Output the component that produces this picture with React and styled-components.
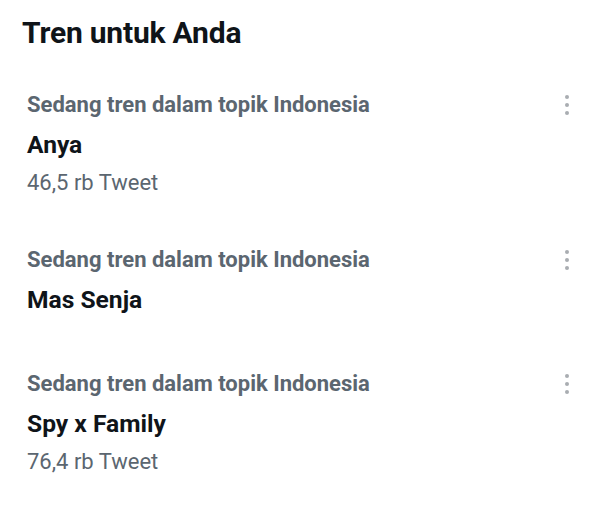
import React from 'react';
import styled, { createGlobalStyle } from 'styled-components';

const GlobalStyle = createGlobalStyle`
  body {
    margin: 0;
    background: #ffffff;
    font-family: Roboto, "Liberation Sans", sans-serif;
  }
`;

const Panel = styled.section`
  width: 600px;
  height: 508px;
  background: #ffffff;
  overflow: hidden;
`;

const Title = styled.h2`
  margin: 0;
  padding: 14px 0 0 22px;
  font-size: 30px;
  line-height: 38px;
  font-weight: 700;
  color: #0f1419;
  letter-spacing: -0.2px;
`;

const List = styled.div`
  display: flex;
  flex-direction: column;
  padding-top: 39px;
`;

const Row = styled.div`
  display: flex;
  justify-content: space-between;
  align-items: flex-start;
  padding: 0 28px 0 27px;
  margin-bottom: ${p => (p.$hasCount ? '49px' : '55px')};
`;

const Texts = styled.div`
  display: flex;
  flex-direction: column;
`;

const Context = styled.div`
  font-size: 22px;
  line-height: 28px;
  font-weight: 700;
  color: #5b6670;
`;

const Name = styled.div`
  margin-top: 11px;
  font-size: 24.6px;
  line-height: 30px;
  font-weight: 700;
  color: #0f1419;
`;

const Count = styled.div`
  margin-top: 9px;
  font-size: 22px;
  line-height: 28px;
  font-weight: 400;
  color: #5b6670;
`;

const More = styled.button`
  border: none;
  background: none;
  padding: 0;
  margin-top: 4px;
  width: 10px;
  display: flex;
  flex-direction: column;
  align-items: center;
  gap: 4px;
`;

const Dot = styled.span`
  width: 4px;
  height: 4px;
  border-radius: 50%;
  background: #a9adb1;
`;

const trends = [
  { name: 'Anya', count: '46,5 rb Tweet' },
  { name: 'Mas Senja' },
  { name: 'Spy x Family', count: '76,4 rb Tweet' },
];

function App() {
  return (
    <Panel>
      <GlobalStyle />
      <Title>Tren untuk Anda</Title>
      <List>
        {trends.map(t => (
          <Row key={t.name} $hasCount={!!t.count}>
            <Texts>
              <Context>Sedang tren dalam topik Indonesia</Context>
              <Name>{t.name}</Name>
              {t.count && <Count>{t.count}</Count>}
            </Texts>
            <More aria-label="Lainnya">
              <Dot />
              <Dot />
              <Dot />
            </More>
          </Row>
        ))}
      </List>
    </Panel>
  );
}

export default App;
